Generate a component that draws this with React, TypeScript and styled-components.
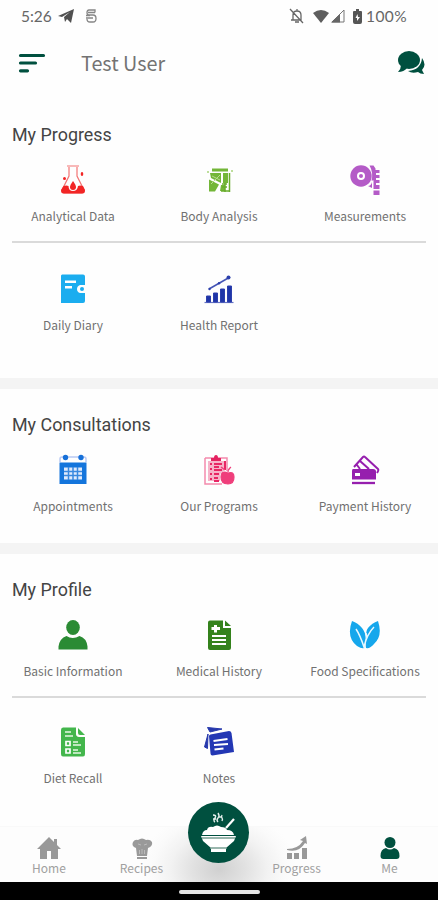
import React from 'react';
import styled, { createGlobalStyle } from 'styled-components';

const labelFont = '"Noto Sans CJK SC", "Noto Sans", sans-serif';
const brand = '#00503f';

const GlobalStyle = createGlobalStyle`
  * { box-sizing: border-box; }
  body { margin: 0; background: #fff; }
`;

const Screen = styled.div`
  display: flex;
  flex-direction: column;
  width: 438px;
  height: 900px;
  overflow: hidden;
  background: #fefefe;
  font-family: ${labelFont};
`;

const StatusBar = styled.div`
  display: flex;
  align-items: center;
  height: 32px;
  padding: 0 31px 0 21px;
  color: #666;
  font: 400 15.5px/32px Lato, sans-serif;
`;

const Clock = styled.span`
  width: 37px;
`;

const StatusIcon = styled.svg<{ $gap?: number }>`
  flex: none;
  margin-left: ${(p) => p.$gap ?? 0}px;
`;

const Spacer = styled.div`
  flex: 1;
`;

const Battery = styled.span`
  width: 41px;
  margin-left: 4px;
  letter-spacing: 0.4px;
  white-space: nowrap;
`;

const Header = styled.header`
  display: flex;
  align-items: center;
  height: 61px;
  padding: 0 13px 0 18px;
`;

const UserName = styled.h1`
  flex: 1;
  margin: 0 0 0 35px;
  color: #737373;
  font: 400 19.800px/30px ${labelFont};
`;

const Content = styled.main`
  height: 733px;
  padding-top: 6px;
  overflow: hidden;
  flex: none;
`;

const Section = styled.section<{ $bottom: number }>`
  padding: 24px 0 ${(p) => p.$bottom}px;
  & + & {
    border-top: 11px solid #f4f4f4;
  }
`;

const SectionTitle = styled.h2`
  margin: 0 0 17px 12px;
  color: #444;
  font: 400 17.900px/24px Roboto, sans-serif;
`;

const Row = styled.div`
  display: grid;
  grid-template-columns: repeat(3, 146px);
`;

const Divider = styled.hr<{ $above: number; $below: number }>`
  height: 2px;
  margin: ${(p) => p.$above}px 12px ${(p) => p.$below}px;
  border: 0;
  background: #dadada;
`;

const Tile = styled.div`
  display: flex;
  flex-direction: column;
  align-items: center;
  gap: 11px;
  color: #717171;
  font-size: 12px;
  line-height: 17px;
  white-space: nowrap;
  svg { display: block; }
`;

const NavBar = styled.nav`
  display: grid;
  grid-template-columns: 98px 87px 67px 89px 97px;
  flex: none;
  height: 56px;
  border-top: 1px solid #f9f9f9;
  background: radial-gradient(ellipse 78px 60px at 219px 42px, #d0d0d0 0, #e2e2e2 35%, #f2f2f2 62%, #fafafa 84%, #fdfdfd 100%);
`;

const NavItem = styled.div<{ $active?: boolean }>`
  display: flex;
  flex-direction: column;
  align-items: center;
  padding-top: 9px;
  color: #a0a0a0;
  font-size: 12px;
  line-height: 15px;
  svg { display: block; color: ${(p) => (p.$active ? brand : '#999')}; }
`;

const MealButton = styled.div`
  justify-self: center;
  width: 61px;
  height: 61px;
  margin-top: -25px;
  border-radius: 50%;
  background: ${brand};
  svg { display: block; }
`;

const SystemBar = styled.div`
  display: flex;
  align-items: center;
  justify-content: center;
  flex: none;
  height: 18px;
  padding-top: 2px;
  background: #000;
`;

const HomeHandle = styled.div`
  width: 81px;
  height: 4px;
  border-radius: 2px;
  background: #e4e4e4;
`;

const Icon = ({ children }: { children: React.ReactNode }) => (
  <svg width="32" height="32" viewBox="0 0 32 32" fill="none">{children}</svg>
);

const Flask = () => (
  <Icon>
    <path d="M10 2h12M12 3v9L5 26q-1 3 2 3h18q3 0 2-3l-7-14V3" stroke="#f27474" strokeWidth="1.200" />
    <path d="M6.500 22q3-1 5 0 0 5 4.500 5t5-5q2-1 5 0l2 4q0 3.500-3 3.500H7q-3 0-3-3.500z" fill="#f22525" />
    <path d="M16 17q3 4 3 6a3 3 0 0 1-6 0q0-2 3-6z" fill="#f22525" />
    <circle cx="7.500" cy="14.500" r="1.500" fill="#f22525" />
    <ellipse cx="25" cy="10" rx="1.300" ry="2" fill="#f22525" />
  </Icon>
);

const Scale = () => (
  <Icon>
    <path d="M9 4.500h16v3H9zM7 9h11v10L8 14zM6 15.500l10 5-4 7H6zM18 21h4v6h-5zM20 9h5v10h-5z" fill="#73b638" />
    <path d="M9 12l8 4M8 20l9-9" stroke="#b9dc91" />
    <path d="M19 20h5M19 23h5M22 19v9M18 27h9M26.500 9v19" stroke="#69ad2c" strokeWidth="1.500" />
    <path d="M4 8h2M5 7v2M28 7h2M29 6v2" stroke="#a8d47b" />
  </Icon>
);

const Tape = () => (
  <Icon>
    <circle cx="12" cy="12" r="10.700" fill="#b45bc7" />
    <circle cx="12" cy="12" r="3" fill="#b45bc7" stroke="#fff" strokeWidth="2" />
    <path d="M20.500 1.500h4l2 3v9l-2 3h-2q2-8-2-15zM19 22q3 0 4-4v6z" fill="#b45bc7" />
    <path d="M25 6h5.500v3H27v2h3.500v3H27v2h3.500v3H27v2h3.500v4h-6V9zM24.500 26.500h6V31h-6z" fill="#b45bc7" />
  </Icon>
);

const Diary = () => (
  <Icon>
    <path fillRule="evenodd" d="M5 1.500h21q2 0 2 2V12h-5q-3 1-3 4t3 4h5v8q0 2-2 2H4V2.500zm3 6V10h11V7.500zm0 5.500v2.500h7V13z" fill="#1badef" />
    <circle cx="25" cy="16" r="2" fill="#1badef" />
  </Icon>
);

const Health = () => (
  <Icon>
    <path d="M1.500 29.500h29" stroke="#6573c4" strokeWidth="1.200" />
    <path d="M3.500 29v-6h4v6zM10.500 29V20h4v9zM17.500 29V16h4v13zM24.500 29V13h4v16z" fill="#1e35a8" stroke="#2c3fac" strokeWidth="1" />
    <path d="M6 16L27 4" stroke="#4454b5" strokeWidth="1.600" />
    <circle cx="25.500" cy="4.500" r="2" fill="#2c3fac" />
    <circle cx="6.500" cy="16" r="1.200" fill="#2c3fac" />
    <circle cx="16" cy="10.300" r="1.200" fill="#2c3fac" />
  </Icon>
);

const Calendar = () => (
  <Icon>
    <path d="M3 8V5q0-2 2-2h22q2 0 2 2v3" stroke="#b8c9f4" strokeWidth="1.500" />
    <circle cx="8.500" cy="3.500" r="2.700" fill="#1670d9" />
    <circle cx="24" cy="3.500" r="2.700" fill="#1670d9" />
    <path d="M2.500 8.500h27V30h-27z" fill="#1475dc" />
    <path d="M7 13.500h18v12H7z" fill="#dfeafc" />
    <path d="M7 17.500h18M7 21.500h18M11.500 13v13M16 13v13M20.500 13v13" stroke="#3988df" strokeWidth="1.500" />
  </Icon>
);

const Programs = () => (
  <Icon>
    <path d="M2 4h22v13M2 4v26h17" stroke="#f38bad" strokeWidth="1.500" />
    <path d="M5 7h16v10l-4 3v7H5z" fill="#f6b3c9" />
    <path d="M8 4h3q0-3 2-3t2 3h3v3H8z" fill="#e52361" />
    <path d="M7 10h2M7 15h2M7 20h2M7 25h2M11 10h8M11 13h5M11 16h8M11 20h5M11 24h4M11 27h5M22 7v9" stroke="#e82665" strokeWidth="2" />
    <path d="M25 19q6-2 6 4 0 7-6 7-7 0-7-7t7-4zM25 18q0-3 3-5" fill="#ef3e7b" stroke="#ef3e7b" strokeWidth="1.200" />
    <path d="M22 16l-4-3" stroke="#ef3e7b" strokeWidth="1.500" />
  </Icon>
);

const Payment = () => (
  <Icon>
    <path d="M5 13l9-10q1-1 2 0l13 12q1 1-1 4M8 11l3 4M11 7l9 8" stroke="#961fae" strokeWidth="2" />
    <path fillRule="evenodd" d="M4 15h20q3 0 3 2.500v8H3V17q0-2 1-2zm2 4v3h5v-3z" fill="#961fae" />
    <path d="M3 29h23" stroke="#961fae" strokeWidth="2.300" />
  </Icon>
);

const Person = () => (
  <Icon>
    <ellipse cx="16" cy="8.500" rx="6.800" ry="7.500" fill="#2b8b34" />
    <path d="M1.500 30.500v-3q1-8 8-10.500 6 4 13 0 7 2 8 10.500v3z" fill="#2b8b34" />
  </Icon>
);

const Medical = () => (
  <Icon>
    <path fillRule="evenodd" d="M7 1.500h13V9h8v20q0 2-2 2H7q-2 0-2-2V3.500q0-2 2-2zM11 6v2H8.500v3H11v2.500h3V11h3V8h-3V6zM9 16v2h14v-2zm0 4v2h14v-2zm0 4v2h14v-2z" fill="#34821c" />
    <path d="M22 1.500L28 7h-6z" fill="#34821c" />
  </Icon>
);

const Leaves = () => (
  <Icon>
    <path d="M3 2Q-3 18 8 27q5 3 7 2 4-13-2-20Q9 4 3 2zM29 2q5 15-4 23-4 5-8 4-1-6 1-12-2-4 1-8 4-5 10-7z" fill="#16a7ec" />
    <path d="M7 10q4 6 8 18 3-13 10-20M18 19l-1-5" stroke="#e8f8ff" strokeWidth="1.500" />
  </Icon>
);

const Diet = () => (
  <Icon>
    <path d="M6 1.500h13V8q0 2.500 3 3h6v17q0 2.500-2 2.500H6q-2 0-2-2.500V4q0-2.500 2-2.500zM21 2l7 7h-5q-2 0-2-2z" fill="#43b64c" />
    <path d="M8 6h6M8 10h8M16 16h5M16 19h8M16 24h5M16 27h8" stroke="#e6f8e4" strokeWidth="1.700" />
    <path d="M9 15.500h4v4H9zM9 23h4v4H9z" stroke="#fff" strokeWidth="1.700" />
  </Icon>
);

const Notes = () => (
  <Icon>
    <path d="M4.500 1.500L19 3 7 6zM5 8L1.500 21l3 1.500z" fill="#2638ac" stroke="#2638ac" />
    <path d="M7.500 8.500L26 5q2 0 2.500 2L31 26 9.500 29.500q-2 0-2-2L6 10q0-1 1.500-1.500z" fill="#2337b4" />
    <path d="M10.500 15l14-2M11 19l14-1M11.500 23.500l9-1" stroke="#fff" strokeWidth="1.900" />
  </Icon>
);

const HomeIcon = () => (
  <svg width="24" height="24" viewBox="0 0 24 24"><path d="M12 1L0 13h3v10h7v-8h4v8h7V13h3l-4-4V3h-3v3z" fill="currentColor" /></svg>
);

const ChefIcon = () => (
  <svg width="24" height="24" viewBox="0 0 24 24">
    <path d="M7 20l-1-8Q1 10 3 6q2-3 5-2 4-3 8 0 4-1 6 2 1 4-4 6l-1 8zM7 21h10v2H7z" fill="currentColor" />
    <path d="M9.500 14v4M12 13v5M14.500 14v4M8 8l3 1M14 9l3-1" stroke="#c4c4c4" strokeWidth=".8" />
  </svg>
);

const ProgressIcon = () => (
  <svg width="24" height="24" viewBox="0 0 24 24" fill="currentColor">
    <path d="M2 17h5v6H2zM9 17h5v6H9zM17 12h5v11h-5zM2 13q11 0 16-8l-3-1 6-4 1 8-2-1q-6 10-18 7z" />
  </svg>
);

const MeIcon = () => (
  <svg width="24" height="24" viewBox="0 0 24 24" fill="currentColor">
    <ellipse cx="12" cy="6.500" rx="5.500" ry="5.500" />
    <path d="M2.500 20q0-7 5.500-8 4 3 8 0 5.500 1 5.500 8 0 3-3 3h-13q-3 0-3-3z" />
  </svg>
);

const BowlIcon = () => (
  <svg width="61" height="61" viewBox="0 0 61 61" fill="none">
    <path d="M14 33q1-5 5-5 1-4 6-3 4-3 8 0 5 0 6 3 6 0 7 5z" fill="#fff" />
    <path d="M38 26l8-9" stroke="#fff" strokeWidth="2.200" />
    <path d="M13 34h35l-2 5-8 7v4H23v-4l-8-7z" fill="#fff" />
    <path d="M14 36h33M22 46h17" stroke="#789e93" strokeWidth="1.300" />
    <path d="M25 13q4 0 2 3t0 4M30 11q2 3 0 5t0 4M34 13q-1 2 0 3t0 3M25 17h3M31 15h3" stroke="#e4efec" strokeWidth="1.400" />
  </svg>
);

type Entry = { label: string; icon: React.ReactNode };

const Tiles = ({ items }: { items: Entry[] }) => (
  <Row>
    {items.map((item) => (
      <Tile key={item.label}>{item.icon}<span>{item.label}</span></Tile>
    ))}
  </Row>
);

export default function App() {
  return (
    <Screen>
      <GlobalStyle />
      <StatusBar>
        <Clock>5:26</Clock>
        <StatusIcon width="17" height="16" viewBox="0 0 17 16"><path d="M0 8L16 1l-3 14-4-4-2 3-1-5 6-5-8 5z" fill="#505050" /></StatusIcon>
        <StatusIcon $gap={10} width="12" height="16" viewBox="0 0 12 16" fill="none" stroke="#858585" strokeWidth="1.300"><path d="M10 4.500V2H4Q2 2 2 4.500T4 7h4q3 0 3 3.500T8 14H5q-3 0-3-3M3 4.500h7M1 10h7M1 7.500h4" /></StatusIcon>
        <Spacer />
        <StatusIcon width="15" height="16" viewBox="0 0 15 16" fill="none" stroke="#666" strokeWidth="1.300"><path d="M4 12h8V7q0-4-4-4T4 7zM1 1l13 14M8 1v2M6 14h4M2 12h3" /></StatusIcon>
        <StatusIcon $gap={9} width="17" height="14" viewBox="0 0 17 14"><path d="M0 4q8-6 16 0L8 14z" fill="#5e5e5e" /></StatusIcon>
        <StatusIcon $gap={1} width="14" height="14" viewBox="0 0 14 14"><path d="M1 13L13 1v12z" fill="none" stroke="#777" /><path d="M0 13.500L9 5v8.500z" fill="#666" /></StatusIcon>
        <StatusIcon $gap={8} width="9" height="15" viewBox="0 0 9 15"><path d="M3 0h3v2h2q1 0 1 1v10q0 2-2 2H2q-2 0-2-2V3q0-1 1-1h2z" fill="#555" /><path d="M4.500 5l-2 4H4v3l3-4H5z" fill="#fff" /></StatusIcon>
        <Battery>100%</Battery>
      </StatusBar>
      <Header>
        <svg width="28" height="22" viewBox="0 0 28 22" stroke={brand} strokeWidth="3.200" strokeLinecap="round"><path d="M2.500 3.500h23M2.500 11H17.500M2.500 18.800H9.500" /></svg>
        <UserName>Test User</UserName>
        <svg width="28" height="26" viewBox="0 0 28 26">
          <path d="M25 8q5 7 0 12l2 4q-4 0-6-2-6 2-10-1Q24 20 25 8z" fill={brand} />
          <ellipse cx="12" cy="10" rx="11" ry="9" fill={brand} />
          <path d="M4 15q0 4-3 7 6 0 9-4z" fill={brand} />
        </svg>
      </Header>
      <Content>
        <Section $bottom={45}>
          <SectionTitle>My Progress</SectionTitle>
          <Tiles items={[{ label: 'Analytical Data', icon: <Flask /> }, { label: 'Body Analysis', icon: <Scale /> }, { label: 'Measurements', icon: <Tape /> }]} />
          <Divider $above={17} $below={30} />
          <Tiles items={[{ label: 'Daily Diary', icon: <Diary /> }, { label: 'Health Report', icon: <Health /> }]} />
        </Section>
        <Section $bottom={29}>
          <SectionTitle>My Consultations</SectionTitle>
          <Tiles items={[{ label: 'Appointments', icon: <Calendar /> }, { label: 'Our Programs', icon: <Programs /> }, { label: 'Payment History', icon: <Payment /> }]} />
        </Section>
        <Section $bottom={28}>
          <SectionTitle>My Profile</SectionTitle>
          <Tiles items={[{ label: 'Basic Information', icon: <Person /> }, { label: 'Medical History', icon: <Medical /> }, { label: 'Food Specifications', icon: <Leaves /> }]} />
          <Divider $above={17} $below={28} />
          <Tiles items={[{ label: 'Diet Recall', icon: <Diet /> }, { label: 'Notes', icon: <Notes /> }]} />
        </Section>
      </Content>
      <NavBar>
        <NavItem><HomeIcon />Home</NavItem>
        <NavItem><ChefIcon />Recipes</NavItem>
        <MealButton><BowlIcon /></MealButton>
        <NavItem><ProgressIcon />Progress</NavItem>
        <NavItem $active><MeIcon />Me</NavItem>
      </NavBar>
      <SystemBar><HomeHandle /></SystemBar>
    </Screen>
  );
}
